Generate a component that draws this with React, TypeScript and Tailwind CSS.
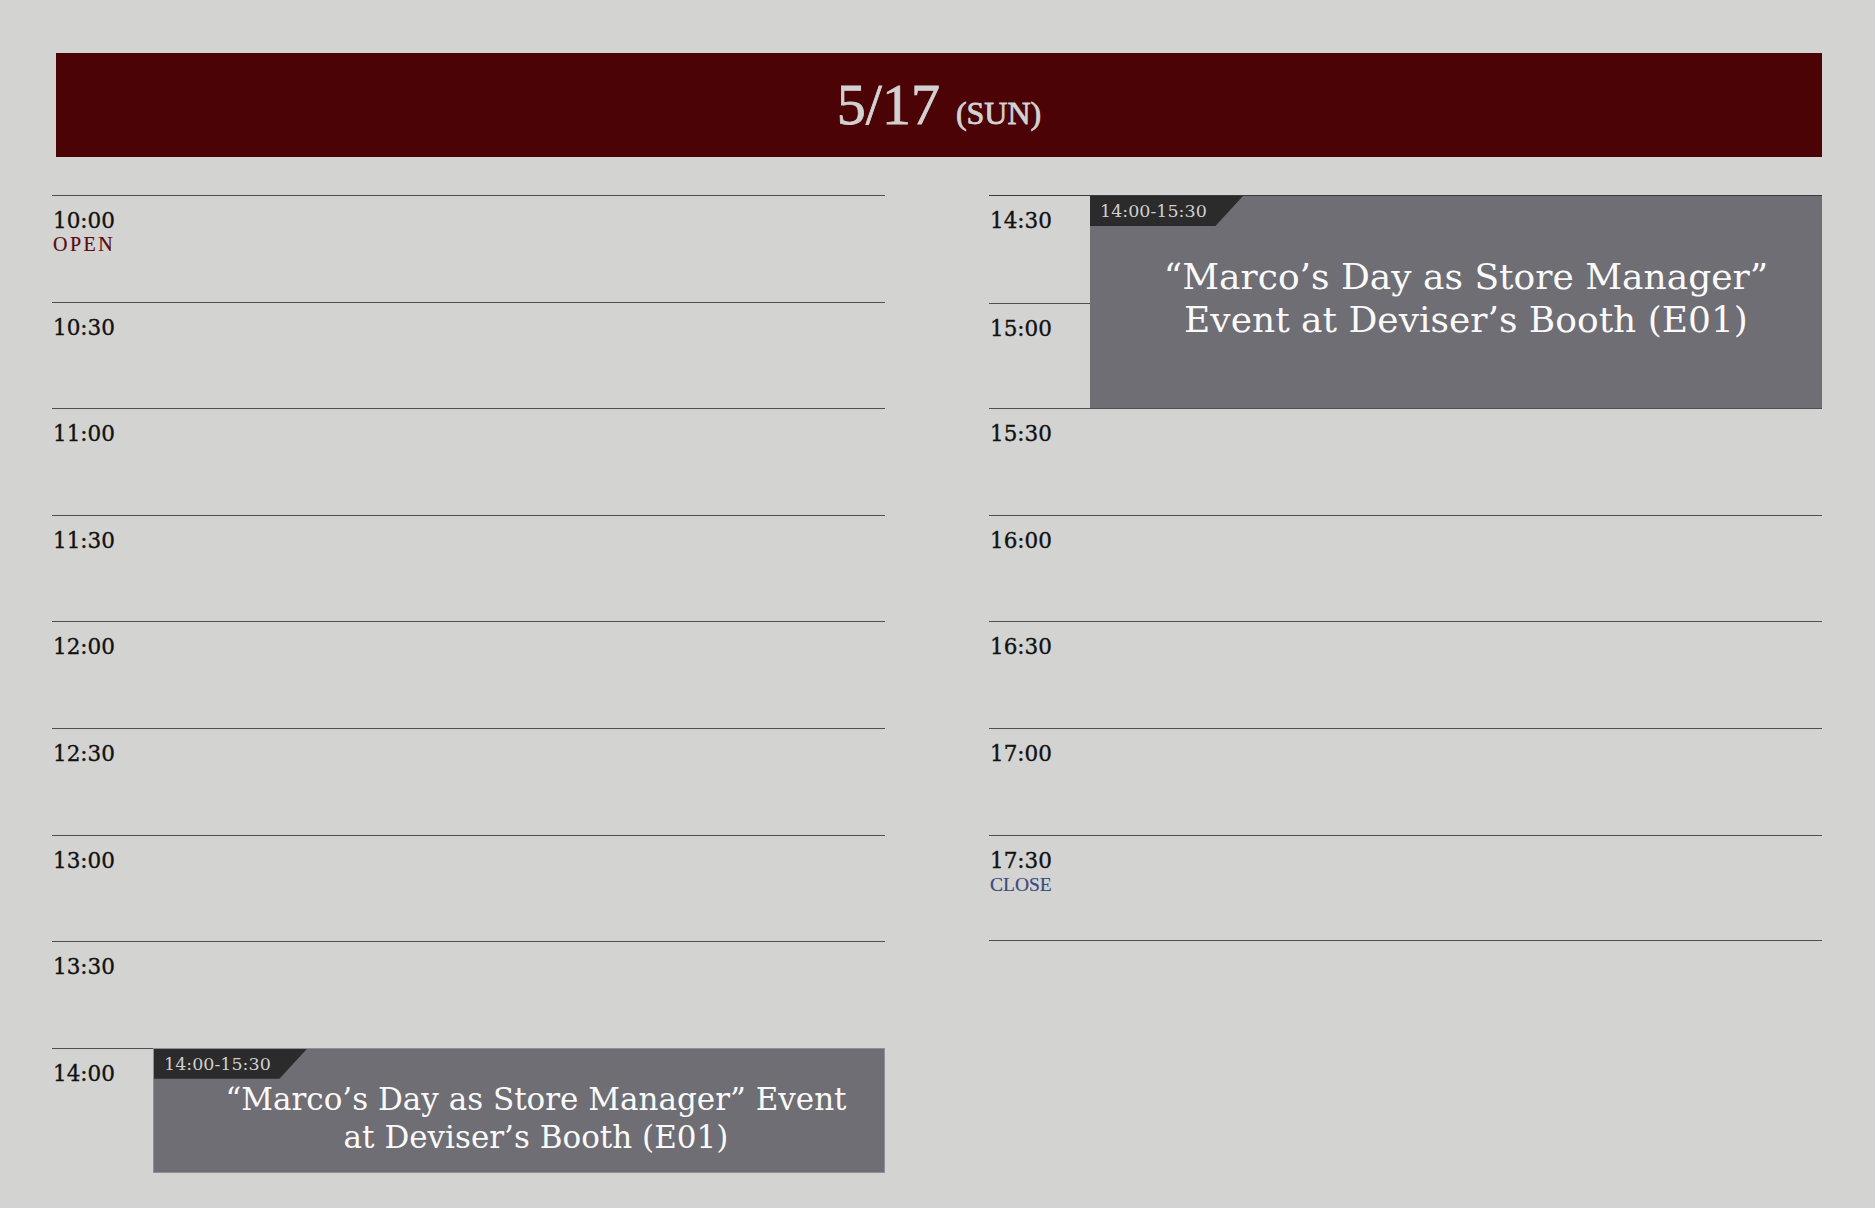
import React from "react";

const serif = "font-['DejaVu_Serif',serif]";
const times = "font-['Liberation_Serif',serif]";

function TimeLabel({ t, sub }: { t: string; sub?: "open" | "close" }) {
  return (
    <div className="pt-[13px] pl-[1px]">
      <div className={`${serif} text-[21.5px] leading-[24px] text-[#111111] [-webkit-text-stroke:0.35px_#111111]`}>{t}</div>
      {sub === "open" && (
        <div className={`${times} mt-[1px] text-[20px] leading-[20px] tracking-[2.5px] text-[#5c0a0e] [-webkit-text-stroke:0.2px_#5c0a0e]`}>OPEN</div>
      )}
      {sub === "close" && (
        <div className={`${times} mt-[2px] text-[19.5px] leading-[20px] text-[#3b4a7e] [-webkit-text-stroke:0.2px_#3b4a7e]`}>CLOSE</div>
      )}
    </div>
  );
}

function Row({ t, sub }: { t: string; sub?: "open" | "close" }) {
  return (
    <div className="h-[106.6px] border-t border-[#4e4e55]">
      <TimeLabel t={t} sub={sub} />
    </div>
  );
}

function Tag() {
  return (
    <div className="h-[30px] w-[153px] bg-[#2b2b2b] [clip-path:polygon(0_0,100%_0,82%_100%,0_100%)] pl-[10px]">
      <span className={`${serif} text-[17.5px] leading-[30px] text-[#d0d0d0] whitespace-nowrap`}>14:00-15:30</span>
    </div>
  );
}

export default function App() {
  return (
    <div className="min-h-screen w-full bg-[#d3d3d1] pt-[53px] pl-[52px] pr-[53px]">
      <div className="ml-[4px] h-[104px] bg-[#4c0306] flex items-center justify-center">
        <div className={`${times} flex items-baseline gap-[16px] text-[#d2d2d2] [-webkit-text-stroke:0.8px_#d2d2d2]`}>
          <span className="text-[58px] leading-none">5/17</span>
          <span className="text-[32px] leading-none">(SUN)</span>
        </div>
      </div>

      <div className="mt-[38px] grid grid-cols-2 gap-[104px]">
        {/* Left column */}
        <div className="flex flex-col">
          <Row t="10:00" sub="open" />
          <Row t="10:30" />
          <Row t="11:00" />
          <Row t="11:30" />
          <Row t="12:00" />
          <Row t="12:30" />
          <Row t="13:00" />
          <Row t="13:30" />
          <div className="flex">
            <div className="w-[101px] h-[106.6px] border-t border-[#4e4e55]">
              <TimeLabel t="14:00" />
            </div>
            <div className="flex-1 h-[125px] bg-[#6f6e74] border border-[#8f8f95] flex flex-col">
              <Tag />
              <div className={`${serif} mt-[1px] pl-[34px] text-center text-[31px] leading-[38px] text-[#fafafa] whitespace-nowrap`}>
                “Marco’s Day as Store Manager” Event
                <br />
                at Deviser’s Booth (E01)
              </div>
            </div>
          </div>
        </div>

        {/* Right column */}
        <div className="flex flex-col">
          <div className="flex h-[213.2px] border-t border-[#3a3a42]">
            <div className="w-[101px] flex flex-col">
              <div className="h-[106.6px]">
                <TimeLabel t="14:30" />
              </div>
              <div className="flex-1 border-t border-[#4e4e55]">
                <TimeLabel t="15:00" />
              </div>
            </div>
            <div className="flex-1 bg-[#6f6e74] flex flex-col">
              <Tag />
              <div className={`${serif} mt-[29px] pl-[20px] text-center text-[36px] leading-[43px] text-[#fafafa] whitespace-nowrap`}>
                “Marco’s Day as Store Manager”
                <br />
                Event at Deviser’s Booth (E01)
              </div>
            </div>
          </div>
          <Row t="15:30" />
          <Row t="16:00" />
          <Row t="16:30" />
          <Row t="17:00" />
          <div className="h-[106.6px] border-t border-b border-[#4e4e55]">
            <TimeLabel t="17:30" sub="close" />
          </div>
        </div>
      </div>
    </div>
  );
}
